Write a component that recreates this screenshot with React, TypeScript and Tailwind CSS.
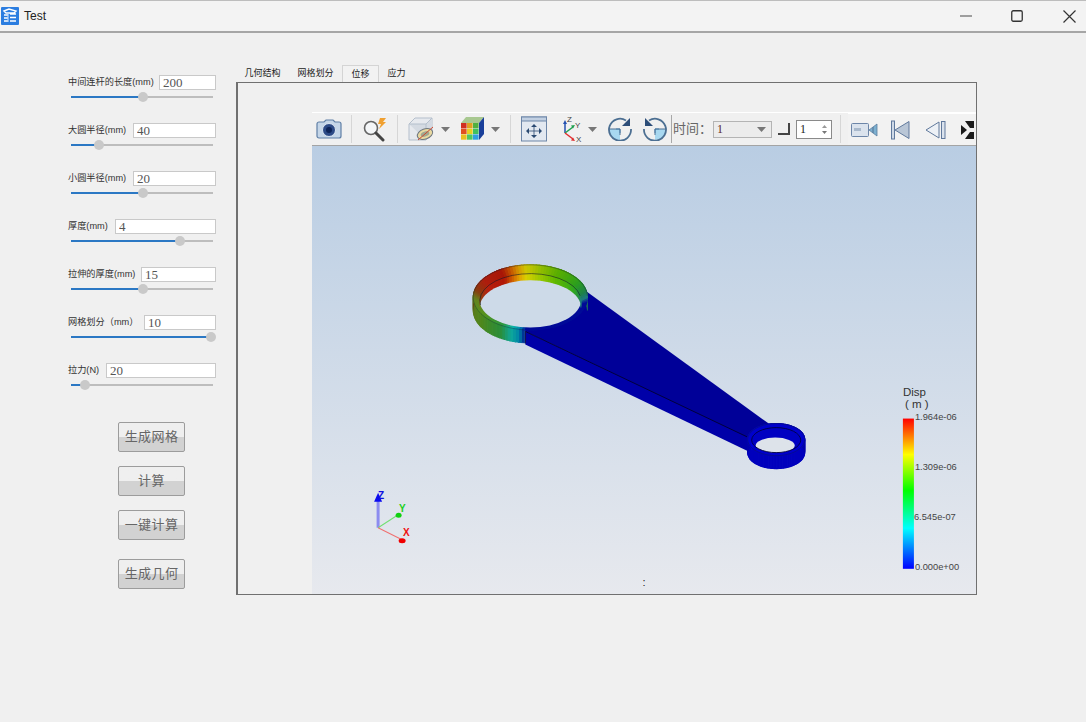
const params = [
  { label: "中间连杆的长度(mm)", value: "200", inputW: 57, fill: 72 },
  { label: "大圆半径(mm)", value: "40", inputW: 83, fill: 28 },
  { label: "小圆半径(mm)", value: "20", inputW: 83, fill: 72 },
  { label: "厚度(mm)", value: "4", inputW: 101, fill: 109 },
  { label: "拉伸的厚度(mm)", value: "15", inputW: 75, fill: 72 },
  { label: "网格划分（mm）", value: "10", inputW: 72, fill: 140 },
  { label: "拉力(N)", value: "20", inputW: 110, fill: 14 },
]

const buttons = [
  { text: "生成网格", mt: "mt-0" },
  { text: "计算", mt: "mt-[14px]" },
  { text: "一键计算", mt: "mt-[14px]" },
  { text: "生成几何", mt: "mt-[19px]" },
]

const tabs = [
  { text: "几何结构", active: false },
  { text: "网格划分", active: false },
  { text: "位移", active: true },
  { text: "应力", active: false },
]

const sans = "font-['Liberation_Sans','Noto_Sans_CJK_SC',sans-serif]"

function Param({ label, value, inputW, fill }: { label: string; value: string; inputW: number; fill: number }) {
  return (
    <div className="h-[48px] w-[148px]">
      <div className="flex h-[15px] items-center justify-between">
        <span className="whitespace-nowrap text-[9.2px] text-[#333]">{label}</span>
        <input
          readOnly
          value={value}
          style={{ width: inputW }}
          className="h-[15px] border border-[#c9c9c9] bg-white px-[3px] font-['Liberation_Serif',serif] text-[13px] text-[#555] outline-none"
        />
      </div>
      <div className="relative ml-[3px] mt-[6px] h-[2px] w-[142px] bg-[#bdbdbd]">
        <div className="h-[2px] bg-[#2b78c4]" style={{ width: fill }} />
        <div
          className="absolute top-[-4px] h-[10px] w-[10px] rounded-full bg-[#c9c9c9]"
          style={{ left: fill - 5 }}
        />
      </div>
    </div>
  )
}

function ActionButton({ text, mt }: { text: string; mt: string }) {
  return (
    <button
      className={`${mt} flex h-[30px] w-[67px] items-center justify-center rounded-[2px] border border-[#9c9c9c] bg-linear-to-b from-[#efefef] from-50% to-[#d2d2d2] to-50% text-[13px] tracking-[0.4px] text-[#666]`}
    >
      {text}
    </button>
  )
}

function Sep({ dark }: { dark?: boolean }) {
  return <div className={`h-[28px] w-[1px] shrink-0 ${dark ? "bg-[#a8a8a8]" : "bg-[#d6d6d6]"}`} />
}

function Arrow({ className }: { className: string }) {
  return (
    <svg width="9" height="5" viewBox="0 0 9 5" className={`${className} shrink-0`}>
      <path d="M0 0H9L4.5 5Z" fill="#777" />
    </svg>
  )
}

function CameraIcon() {
  return (
    <svg width="26" height="22" viewBox="0 0 26 22" className="ml-[4px] shrink-0">
      <path d="M1 6a2 2 0 0 1 2-2h5l2-2h7l2 2h4a2 2 0 0 1 2 2v12a2 2 0 0 1-2 2H3a2 2 0 0 1-2-2z" fill="#c5d6e8" stroke="#5f7fa6" strokeWidth="1.2" />
      <circle cx="13" cy="12" r="6.5" fill="#2c4a86" stroke="#dbe6f2" />
      <circle cx="13" cy="12" r="3" fill="#0d2458" />
    </svg>
  )
}

function SearchBoltIcon() {
  return (
    <svg width="26" height="26" viewBox="0 0 26 26" className="ml-[10px] shrink-0">
      <circle cx="9" cy="12" r="6.5" fill="#f4f6f8" stroke="#666" strokeWidth="1.6" />
      <path d="M14 17l7 7" stroke="#444" strokeWidth="3" strokeLinecap="round" />
      <path d="M18 2h6l-3 4h3l-7 7 2-5h-3z" fill="#f0a030" />
    </svg>
  )
}

function BoxSliceIcon() {
  return (
    <svg width="26" height="26" viewBox="0 0 26 26" className="ml-[10px] shrink-0">
      <path d="M1 8l6-6h17v16l-6 6H1z" fill="#e6e9ee" stroke="#b4bfcc" />
      <path d="M1 8h17l6-6v16l-6 6z" fill="#d4dae2" />
      <path d="M1 8h17v16M18 8l6-6" fill="none" stroke="#b4bfcc" />
      <ellipse cx="17" cy="18" rx="8" ry="5" fill="#e8d8a0" stroke="#707880" transform="rotate(-20 17 18)" />
      <ellipse cx="17" cy="18" rx="4.500" ry="2.500" fill="#a0a890" transform="rotate(-20 17 18)" />
      <path d="M10 24L25 11" stroke="#d04a30" strokeWidth="1" />
    </svg>
  )
}

function ColorCubeIcon() {
  const colors = ["#d03020", "#e0a020", "#50b040", "#e05020", "#e8d020", "#40c060", "#e8c020", "#50c860", "#30a0e0"]
  return (
    <svg width="25" height="26" viewBox="0 0 25 26" className="ml-[10px] shrink-0">
      <path d="M6 1h18l-5 6H1z" fill="#a8c890" />
      <path d="M19 7l5-6v17l-5 6z" fill="#1a3f9a" />
      {colors.map((c, i) => (
        <rect key={c + i} x={1 + (i % 3) * 6} y={7 + Math.floor(i / 3) * 5.7} width="5.6" height="5.3" fill={c} />
      ))}
    </svg>
  )
}

function FitIcon() {
  return (
    <svg width="26" height="26" viewBox="0 0 26 26" className="ml-[10px] shrink-0">
      <rect x="0.5" y="1" width="25" height="24" fill="#e2e8f0" stroke="#6d86a8" />
      <rect x="0.5" y="1" width="25" height="4" fill="#c2d0e2" stroke="#6d86a8" />
      <path d="M13 8l-3 3h6zM13 22l-3-3h6zM5 15l3-3v6zM21 15l-3-3v6z" fill="#2b4a72" />
      <path d="M13 10v10M7 15h12" stroke="#2b4a72" strokeWidth="0.8" />
    </svg>
  )
}

function AxesIcon() {
  return (
    <svg width="24" height="28" viewBox="0 0 24 28" className="ml-[13px] shrink-0">
      <path d="M5 18V8" stroke="#2450b0" strokeWidth="1.5" />
      <path d="M5 5l-2 4h4z" fill="#2450b0" />
      <path d="M5 18l8-6" stroke="#20a050" strokeWidth="1.5" />
      <path d="M15 10l-4 0.5 2 3z" fill="#20a050" />
      <path d="M5 18l8 6" stroke="#e03030" strokeWidth="1.5" />
      <path d="M15 26l-4-0.5 2-3z" fill="#e03030" />
      <text x="7" y="7" fontSize="8" fill="#444" fontFamily="Liberation Sans">Z</text>
      <text x="15" y="13" fontSize="8" fill="#444" fontFamily="Liberation Sans">Y</text>
      <text x="16" y="27" fontSize="8" fill="#444" fontFamily="Liberation Sans">X</text>
    </svg>
  )
}

function RotateIcon({ flip, className }: { flip?: boolean; className: string }) {
  return (
    <svg width="24" height="24" viewBox="0 0 24 24" className={`${className} shrink-0 ${flip ? "-scale-x-100" : ""}`}>
      <path d="M12 12H1a11 11 0 0 0 11 11z" fill="#a8d8f0" />
      <path d="M12 12v4M12 12h-4" stroke="#4a90c0" />
      <path d="M18 3.5A11 11 0 1 0 23 12" fill="none" stroke="#4c6f92" strokeWidth="1.8" />
      <path d="M1 12h11v6" fill="none" stroke="#4c6f92" strokeWidth="1" />
      <path d="M22 1v8h-8z" fill="#2c4d78" />
    </svg>
  )
}

function VideoIcon() {
  return (
    <svg width="27" height="16" viewBox="0 0 27 16" className="ml-[3px] shrink-0">
      <rect x="0.5" y="1.5" width="17" height="13" rx="1" fill="#dbe3ed" stroke="#6d86a8" />
      <rect x="3" y="6" width="7" height="3" fill="#a9b9cc" />
      <path d="M18 8l4-3v6zM26 2v12l-4-3V5z" fill="#7db0d0" stroke="#5b7da0" strokeWidth="0.8" />
    </svg>
  )
}

function FirstIcon() {
  return (
    <svg width="19" height="20" viewBox="0 0 19 20" className="ml-[13px] shrink-0">
      <rect x="0.5" y="1" width="3" height="18" fill="#cfd9e6" stroke="#60799c" />
      <path d="M18 1.5v17L4 10z" fill="#b9c6d6" stroke="#60799c" />
    </svg>
  )
}

function PrevIcon() {
  return (
    <svg width="21" height="20" viewBox="0 0 21 20" className="ml-[15px] shrink-0">
      <path d="M14 2v16L1 10z" fill="#edf1f6" stroke="#60799c" />
      <rect x="16.5" y="1.5" width="3.5" height="17" fill="#dbe3ed" stroke="#60799c" />
    </svg>
  )
}

function ClippedIcon() {
  return (
    <svg width="13" height="18" viewBox="0 0 13 18" className="ml-[15px] shrink-0">
      <path d="M0 4l6 5-6 5z" fill="#1c1c1c" />
      <path d="M4 0h9v7H9zM4 18h9v-7H9z" fill="#1c1c1c" />
    </svg>
  )
}

function Toolbar() {
  return (
    <div className="flex h-[34px] shrink-0 items-center overflow-hidden border-b border-b-[#a4a4a4] border-t border-t-white">
      <CameraIcon />
      <div className="ml-[9px]"><Sep /></div>
      <SearchBoltIcon />
      <div className="ml-[9px]"><Sep /></div>
      <BoxSliceIcon />
      <Arrow className="ml-[7px]" />
      <ColorCubeIcon />
      <Arrow className="ml-[6px]" />
      <div className="ml-[10px]"><Sep /></div>
      <FitIcon />
      <AxesIcon />
      <Arrow className="ml-[4px]" />
      <RotateIcon className="ml-[11px]" />
      <RotateIcon flip className="ml-[11px]" />
      <div className="ml-[4px]"><Sep dark /></div>
      <span className="ml-[1px] w-[33px] shrink-0 whitespace-nowrap text-[13px] text-[#666]">时间：</span>
      <div className="ml-[7px] flex h-[17px] w-[59px] shrink-0 items-center justify-between border border-[#b4b4b4] bg-[#ececec] pl-[3px] pr-[5px] font-['Liberation_Serif',serif] text-[12px] text-[#5a1f2a]">
        1
        <Arrow className="" />
      </div>
      <div className="ml-[6px] h-[12px] w-[12px] shrink-0 border-b-2 border-r-2 border-b-[#444] border-r-[#444]" />
      <div className="ml-[6px] flex h-[19px] w-[36px] shrink-0 items-center justify-between border border-[#8a8a8a] bg-white pl-[3px] pr-[4px] font-['Liberation_Serif',serif] text-[12px] text-[#222]">
        1
        <div className="flex flex-col gap-[3px]">
          <svg width="5" height="3" viewBox="0 0 5 3"><path d="M2.5 0L5 3H0z" fill="#999" /></svg>
          <svg width="5" height="3" viewBox="0 0 5 3"><path d="M0 0H5L2.5 3z" fill="#777" /></svg>
        </div>
      </div>
      <div className="ml-[8px]"><Sep /></div>
      <div className="ml-[7px] flex h-[33px] flex-1 items-center border-t border-t-white bg-[#f2f2f2]">
        <VideoIcon />
        <FirstIcon />
        <PrevIcon />
        <ClippedIcon />
      </div>
    </div>
  )
}

type Stop = [number, number, number, number]

const jetStops: Stop[] = [
  [0, 32, 128, 138], [10, 0, 12, 160], [95, 0, 12, 160], [102, 0, 150, 190], [110, 16, 190, 176],
  [122, 48, 160, 64], [150, 90, 154, 32], [180, 106, 138, 32], [195, 144, 64, 16], [215, 184, 32, 16],
  [240, 176, 24, 8], [250, 208, 96, 0], [258, 224, 160, 0], [266, 216, 208, 0], [280, 160, 200, 0],
  [300, 96, 184, 0], [330, 48, 168, 32], [350, 32, 136, 80], [358, 32, 128, 128], [360, 32, 128, 138],
]

function ringColor(t: number, shade: number) {
  let i = 0
  while (i < jetStops.length - 2 && jetStops[i + 1][0] < t) i++
  const a = jetStops[i]
  const b = jetStops[i + 1]
  const k = Math.min(1, Math.max(0, (t - a[0]) / (b[0] - a[0])))
  const mix = (n: 1 | 2 | 3) => Math.round((a[n] + (b[n] - a[n]) * k) * shade)
  return `rgb(${mix(1)},${mix(2)},${mix(3)})`
}

const blueColor = (_t: number, shade: number) => `rgb(0,0,${Math.round(215 * shade)})`

function pt(cx: number, cy: number, rx: number, ry: number, t: number) {
  const r = (t * Math.PI) / 180
  return `${(cx + rx * Math.cos(r)).toFixed(2)},${(cy + ry * Math.sin(r)).toFixed(2)}`
}

function Ring(props: {
  id: string; cx: number; cy: number; rx: number; ry: number; icy: number; irx: number; iry: number
  depth: number; wall: number; from: number; hole: string; innerFull?: boolean
  opening?: { cx: number; cy: number; rx: number; ry: number }
  color: (t: number, shade: number) => string
}) {
  const { id, cx, cy, rx, ry, icy, irx, iry, depth, wall, from, hole, innerFull, opening, color } = props
  const steps: number[] = []
  for (let t = 0; t < 360; t += 3) steps.push(t)
  const quad = (t: number, shade: number, a: string, b: string, c: string, d: string) => {
    const fill = color(t + 1.5, shade)
    return <polygon key={`${a}-${shade}`} points={`${a} ${b} ${c} ${d}`} fill={fill} stroke={fill} strokeWidth="1" />
  }
  const gap = opening ?? { cx, cy: icy + wall, rx: irx, ry: iry }
  return (
    <g>
      {steps.filter((t) => t >= from && t < 180).map((t) =>
        quad(t, 0.88, pt(cx, cy, rx, ry, t), pt(cx, cy, rx, ry, t + 3), pt(cx, cy + depth, rx, ry, t + 3), pt(cx, cy + depth, rx, ry, t)))}
      {steps.filter((t) => t >= 180).map((t) =>
        quad(t, 0.8, pt(cx, cy, rx, ry, t), pt(cx, cy, rx, ry, t + 3), pt(cx, cy + depth, rx, ry, t + 3), pt(cx, cy + depth, rx, ry, t)))}
      {steps.map((t) =>
        quad(t, 0.95, pt(cx, cy, rx, ry, t), pt(cx, cy, rx, ry, t + 3), pt(cx, icy, irx, iry, t + 3), pt(cx, icy, irx, iry, t)))}
      {steps.filter((t) => t >= 180).map((t) =>
        quad(t, 1, pt(cx, icy, irx, iry, t), pt(cx, icy, irx, iry, t + 3), pt(cx, icy + wall, irx, iry, t + 3), pt(cx, icy + wall, irx, iry, t)))}
      {opening && <ellipse cx={cx} cy={icy} rx={irx} ry={iry} fill={color(270, 0.9)} />}
      <clipPath id={id}>
        <ellipse cx={cx} cy={icy} rx={irx} ry={iry} />
      </clipPath>
      <ellipse cx={gap.cx} cy={gap.cy} rx={gap.rx} ry={gap.ry} fill={hole} clipPath={`url(#${id})`} />
      <polyline
        points={steps.filter((t) => t >= from).map((t) => pt(cx, cy, rx, ry, t)).join(" ")}
        fill="none" stroke="#102030" strokeOpacity="0.55" strokeWidth="0.7"
      />
      {innerFull ? (
        <ellipse cx={cx} cy={icy} rx={irx} ry={iry} fill="none" stroke="#000040" strokeWidth="0.9" />
      ) : (
        <path d={`M${pt(cx, icy, irx, iry, 170)}A${irx} ${iry} 0 0 1 ${pt(cx, icy, irx, iry, 350)}`} fill="none" stroke="#101828" strokeOpacity="0.75" strokeWidth="0.8" />
      )}
    </g>
  )
}

function Model() {
  return (
    <svg viewBox="312 146 663 447" className="block h-full w-full">
      {/* connecting arm */}
      <polygon points="525,331 525,344 748,451 752,437" fill="#0000a8" />
      <polygon points="582,288 768,423 750,438 525,331 520,310" fill="#000098" />
      <path d="M525 331L748 437M525 331V343" stroke="#000030" strokeWidth="0.9" fill="none" />
      <Ring id="big-hole" cx={530} cy={297} rx={57} ry={32.5} icy={300} irx={50.5} iry={27} depth={13} wall={7} from={95} hole="#cddae8" color={ringColor} />
      <Ring id="small-hole" cx={775.5} cy={439} rx={28.5} ry={16} icy={439.5} irx={24.5} iry={12.5} depth={13} wall={10} from={0} hole="#dde3ea" innerFull opening={{ cx: 774.5, cy: 445, rx: 19.5, ry: 8 }} color={blueColor} />
      {/* axes triad */}
      <path d="M378 527V499" stroke="#8c8cf0" strokeWidth="3" />
      <path d="M378 527L398 514" stroke="#70e070" strokeWidth="1" />
      <path d="M378 527L402 539" stroke="#f07070" strokeWidth="1" />
      <path d="M378 492l-4 9h8z" fill="#0a0af0" />
      <ellipse cx="398.500" cy="514.500" rx="3" ry="2.500" fill="#10d010" />
      <ellipse cx="402" cy="540" rx="3.500" ry="2.500" fill="#f00000" />
      <text x="378" y="498" fontSize="10" fontWeight="700" fill="#1010e0" fontFamily="Liberation Sans">Z</text>
      <text x="399" y="511" fontSize="10" fontWeight="700" fill="#20d020" fontFamily="Liberation Sans">Y</text>
      <text x="403" y="535" fontSize="10" fontWeight="700" fill="#f01010" fontFamily="Liberation Sans">X</text>
      {/* legend */}
      <defs>
        <linearGradient id="jet" x1="0" y1="0" x2="0" y2="1">
          <stop offset="0" stopColor="#ff0000" />
          <stop offset="0.24" stopColor="#ffff00" />
          <stop offset="0.48" stopColor="#00ff00" />
          <stop offset="0.73" stopColor="#00ffff" />
          <stop offset="1" stopColor="#0000ff" />
        </linearGradient>
      </defs>
      <rect x="902" y="418" width="11" height="150" fill="url(#jet)" />
      <text x="902" y="395" fontSize="11.5" fill="#333" fontFamily="Liberation Sans">Disp</text>
      <text x="904" y="407" fontSize="11.5" fill="#333" fontFamily="Liberation Sans">( m )</text>
      <text x="914" y="419" fontSize="9.3" fill="#444" fontFamily="Liberation Sans">1.964e-06</text>
      <text x="914" y="469" fontSize="9.3" fill="#444" fontFamily="Liberation Sans">1.309e-06</text>
      <text x="913" y="519" fontSize="9.3" fill="#444" fontFamily="Liberation Sans">6.545e-07</text>
      <text x="914" y="569" fontSize="9.3" fill="#444" fontFamily="Liberation Sans">0.000e+00</text>
      <text x="642" y="585" fontSize="11" fill="#222" fontFamily="Liberation Sans">:</text>
    </svg>
  )
}

function TitleBar() {
  return (
    <header className="flex h-[33px] shrink-0 items-center border-b-2 border-t border-b-[#a6a6a6] border-t-[#bdbdbd] bg-[#f3f3f3] pl-[1px]">
      <svg width="18" height="18" viewBox="0 0 18 18" className="shrink-0">
        <rect width="18" height="18" rx="1" fill="#2b7de0" />
        <path d="M3 4l5-2 7 2-2 2H5zM3 8h4M9 7h6M3 11h4M9 10.500h6M3 14h4M9 14h6" stroke="#fff" strokeWidth="1.4" fill="none" />
        <path d="M7 6v9" stroke="#bcd8f8" strokeWidth="1.2" />
      </svg>
      <span className="ml-[5px] text-[12px] text-[#222]">Test</span>
      <svg width="12" height="2" viewBox="0 0 12 2" className="ml-auto shrink-0"><path d="M0 1h12" stroke="#666" strokeWidth="1.2" /></svg>
      <svg width="12" height="12" viewBox="0 0 12 12" className="ml-[39px] shrink-0"><rect x="0.75" y="0.75" width="10.500" height="10.500" rx="1.500" fill="none" stroke="#333" strokeWidth="1.300" /></svg>
      <svg width="13" height="13" viewBox="0 0 13 13" className="ml-[40px] mr-[10px] shrink-0"><path d="M0.500 0.500l12 12M12.500 0.500l-12 12" stroke="#333" strokeWidth="1.200" /></svg>
    </header>
  )
}

export default function App() {
  return (
    <div className={`flex h-[722px] w-[1086px] flex-col overflow-hidden bg-[#f0f0f0] ${sans}`}>
      <TitleBar />
      <main className="flex flex-1">
        <aside className="w-[236px] shrink-0 pl-[68px] pt-[42px]">
          {params.map((p) => (
            <Param key={p.label} {...p} />
          ))}
          <div className="ml-[50px] mt-[11px] flex flex-col">
            {buttons.map((b) => (
              <ActionButton key={b.text} {...b} />
            ))}
          </div>
        </aside>
        <section className="w-[741px] shrink-0 pt-[32px]">
          <div className="flex h-[17px] items-end">
            {tabs.map((t) => (
              <div
                key={t.text}
                className={`flex h-[17px] items-center px-[8.500px] pt-[1px] text-[9px] text-[#222] ${t.active ? "border border-b-0 border-[#d4d4d4] bg-[#f2f2f2]" : ""}`}
              >
                {t.text}
              </div>
            ))}
          </div>
          <div className="flex h-[513px] flex-col border border-l-2 border-[#707070] pl-[74px] pt-[29px]">
            <Toolbar />
            <div className="min-h-0 flex-1 bg-linear-to-b from-[#b9cde3] to-[#e7e9ee]">
              <Model />
            </div>
          </div>
        </section>
      </main>
    </div>
  )
}
